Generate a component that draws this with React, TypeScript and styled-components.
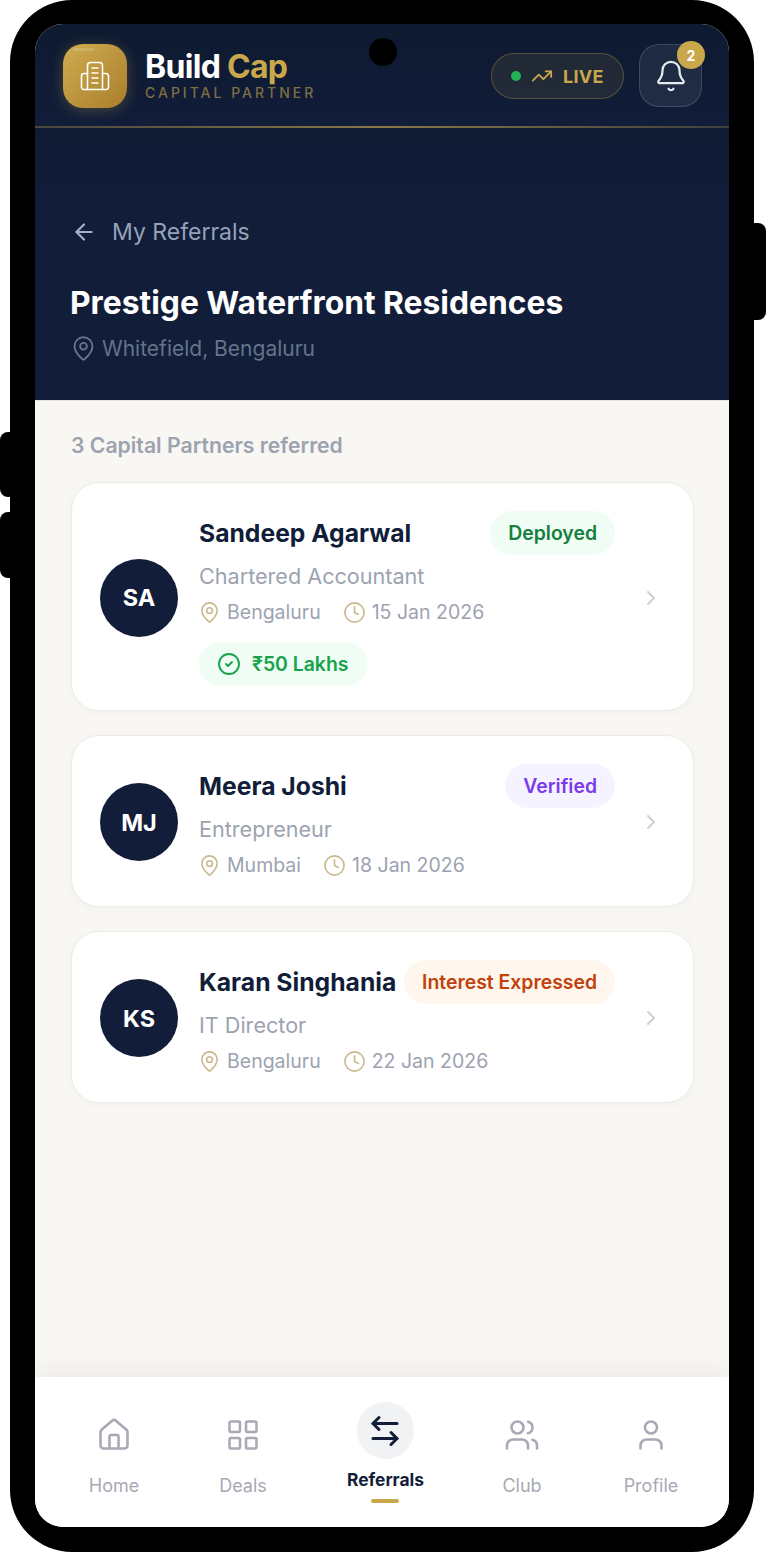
import React from "react";
import styled, { createGlobalStyle } from "styled-components";
import {
  ArrowLeft,
  ArrowLeftRight,
  Bell,
  ChevronRight,
  CircleCheck,
  Clock,
  House,
  LayoutGrid,
  MapPin,
  TrendingUp,
  User,
  Users,
} from "lucide-react";

type Referral = {
  initials: string;
  name: string;
  role: string;
  city: string;
  date: string;
  status: "deployed" | "verified" | "interest";
  statusLabel: string;
  amount?: string;
};

const referrals: Referral[] = [
  {
    initials: "SA",
    name: "Sandeep Agarwal",
    role: "Chartered Accountant",
    city: "Bengaluru",
    date: "15 Jan 2026",
    status: "deployed",
    statusLabel: "Deployed",
    amount: "₹50 Lakhs",
  },
  {
    initials: "MJ",
    name: "Meera Joshi",
    role: "Entrepreneur",
    city: "Mumbai",
    date: "18 Jan 2026",
    status: "verified",
    statusLabel: "Verified",
  },
  {
    initials: "KS",
    name: "Karan Singhania",
    role: "IT Director",
    city: "Bengaluru",
    date: "22 Jan 2026",
    status: "interest",
    statusLabel: "Interest Expressed",
  },
];

const statusColors = {
  deployed: { bg: "#f0fdf4", fg: "#15803d" },
  verified: { bg: "#f5f3ff", fg: "#7c3aed" },
  interest: { bg: "#fff7ed", fg: "#c2410c" },
};

const navItems = [
  { label: "Home", Icon: House },
  { label: "Deals", Icon: LayoutGrid },
  { label: "Referrals", Icon: ArrowLeftRight, active: true },
  { label: "Club", Icon: Users },
  { label: "Profile", Icon: User },
];

function App() {
  return (
    <>
      <GlobalStyle />
      <Phone>
        <SideKey $side="right" $top={223} $height={97} />
        <SideKey $side="left" $top={432} $height={65} />
        <SideKey $side="left" $top={512} $height={66} />
        <Screen>
          <Camera />
          <Header>
            <LogoBox>
              <svg width="30" height="30" viewBox="0 0 30 30" fill="none" stroke="#fff" strokeWidth="1.6" strokeLinecap="round" strokeLinejoin="round">
                <path d="M7.5 28.5V4.5a3 3 0 0 1 3-3h9a3 3 0 0 1 3 3v24" />
                <path d="M7.5 12.5H4a2.500 2.500 0 0 0-2.500 2.500v11a2.500 2.500 0 0 0 2.500 2.500h22a2.500 2.500 0 0 0 2.500-2.500V15a2.500 2.500 0 0 0-2.500-2.500h-3.500" />
                <path d="M12 7h6M12 12h6M12 17h6M12 22h6" />
              </svg>
            </LogoBox>
            <Brand>
              <BrandName>
                Build <Gold>Cap</Gold>
              </BrandName>
              <BrandSub>CAPITAL PARTNER</BrandSub>
            </Brand>
            <LivePill>
              <LiveDot />
              <TrendingUp size={22} color="#c9a84c" strokeWidth={2} />
              <LiveText>LIVE</LiveText>
            </LivePill>
            <BellButton>
              <Bell size={34} color="#e6e9ef" strokeWidth={1.6} />
              <BellBadge>2</BellBadge>
            </BellButton>
          </Header>
          <GoldLine />
          <Hero>
            <BackRow>
              <ArrowLeft size={26} color="#a3b1c6" strokeWidth={2} />
              <BackText>My Referrals</BackText>
            </BackRow>
            <Title>Prestige Waterfront Residences</Title>
            <LocationRow>
              <MapPin size={27} color="#64748b" strokeWidth={1.7} />
              <LocationText>Whitefield, Bengaluru</LocationText>
            </LocationRow>
          </Hero>
          <Content>
            <CountText>3 Capital Partners referred</CountText>
            <CardList>
              {referrals.map((r) => (
                <Card key={r.initials}>
                  <Avatar>{r.initials}</Avatar>
                  <Details>
                    <NameRow>
                      <Name>{r.name}</Name>
                      <StatusBadge $status={r.status}>{r.statusLabel}</StatusBadge>
                    </NameRow>
                    <Role>{r.role}</Role>
                    <MetaRow>
                      <MetaItem>
                        <MapPin size={23} color="#c9b98a" strokeWidth={1.7} />
                        {r.city}
                      </MetaItem>
                      <MetaItem>
                        <Clock size={23} color="#c9b98a" strokeWidth={1.7} />
                        {r.date}
                      </MetaItem>
                    </MetaRow>
                    {r.amount && (
                      <AmountPill>
                        <CircleCheck size={24} color="#16a34a" strokeWidth={1.9} />
                        {r.amount}
                      </AmountPill>
                    )}
                  </Details>
                  <Chevron>
                    <ChevronRight size={24} color="#d1d0c9" strokeWidth={2} />
                  </Chevron>
                </Card>
              ))}
            </CardList>
          </Content>
          <Nav>
            {navItems.map(({ label, Icon, active }) => (
              <NavItem key={label} $active={active}>
                <NavIcon $active={active}>
                  <Icon size={36} color={active ? "#111d3a" : "#a8a9b4"} strokeWidth={active ? 2 : 1.7} />
                </NavIcon>
                <NavLabel $active={active}>{label}</NavLabel>
                {active && <NavMark />}
              </NavItem>
            ))}
          </Nav>
        </Screen>
      </Phone>
    </>
  );
}

const GlobalStyle = createGlobalStyle`
  html, body {
    margin: 0;
    padding: 0;
    background: #ffffff;
  }
  body {
    font-family: "Inter", "Liberation Sans", sans-serif;
  }
`;

const Phone = styled.div`
  position: relative;
  box-sizing: border-box;
  width: 744px;
  height: 1552px;
  margin-left: 10px;
  padding: 24px 25px 25px;
  background: #000000;
  border-radius: 62px;
`;

const SideKey = styled.div<{ $side: "left" | "right"; $top: number; $height: number }>`
  position: absolute;
  top: ${(p) => p.$top}px;
  ${(p) => (p.$side === "left" ? "left: -10px;" : "right: -12px;")}
  width: 24px;
  height: ${(p) => p.$height}px;
  background: #000000;
  border-radius: 8px;
`;

const Screen = styled.div`
  position: relative;
  height: 100%;
  display: flex;
  flex-direction: column;
  overflow: hidden;
  border-radius: 28px;
  background: #f8f7f3;
`;

const Camera = styled.div`
  position: absolute;
  top: 14px;
  left: 334px;
  width: 28px;
  height: 28px;
  border-radius: 50%;
  background: #000000;
`;

const Header = styled.header`
  box-sizing: border-box;
  height: 102px;
  flex-shrink: 0;
  display: flex;
  align-items: flex-start;
  padding: 20px 27px 0 28px;
  background: linear-gradient(180deg, #0e1a30 0%, #111d39 100%);
`;

const LogoBox = styled.div`
  position: relative;
  width: 64px;
  height: 64px;
  display: flex;
  align-items: center;
  justify-content: center;
  border-radius: 20px;
  background: linear-gradient(135deg, #d0ac50 0%, #a97e2c 100%);
  box-shadow: 0 2px 14px rgba(201, 168, 76, 0.3);

  &::before {
    content: "";
    position: absolute;
    top: 4px;
    left: 10px;
    width: 22px;
    height: 3px;
    border-radius: 2px;
    background: rgba(255, 255, 255, 0.15);
  }
`;

const Brand = styled.div`
  margin-left: 18px;
  margin-top: 5px;
  display: flex;
  flex-direction: column;
`;

const BrandName = styled.div`
  font-size: 32px;
  line-height: 36px;
  font-weight: 700;
  letter-spacing: -0.7px;
  color: #ffffff;
`;

const Gold = styled.span`
  color: #c9a84c;
`;

const BrandSub = styled.div`
  font-size: 14px;
  line-height: 16px;
  font-weight: 500;
  letter-spacing: 3px;
  color: rgba(201, 168, 76, 0.6);
`;

const LivePill = styled.div`
  box-sizing: border-box;
  width: 133px;
  height: 46px;
  margin-left: auto;
  margin-top: 9px;
  display: flex;
  align-items: center;
  padding-left: 19px;
  gap: 10px;
  border-radius: 23px;
  border: 1.5px solid rgba(201, 168, 76, 0.32);
  background: rgba(201, 168, 76, 0.1);
`;

const LiveDot = styled.span`
  width: 10px;
  height: 10px;
  border-radius: 50%;
  background: #22b455;
`;

const LiveText = styled.span`
  font-size: 18px;
  font-weight: 700;
  letter-spacing: 0.3px;
  color: #c9a84c;
`;

const BellButton = styled.div`
  position: relative;
  box-sizing: border-box;
  width: 63px;
  height: 63px;
  margin-left: 15px;
  display: flex;
  align-items: center;
  justify-content: center;
  border-radius: 20px;
  border: 1.5px solid rgba(255, 255, 255, 0.14);
  background: rgba(255, 255, 255, 0.07);
`;

const BellBadge = styled.span`
  position: absolute;
  top: -4px;
  right: -4px;
  width: 28px;
  height: 28px;
  display: flex;
  align-items: center;
  justify-content: center;
  border-radius: 50%;
  background: #c9a84c;
  font-size: 14px;
  font-weight: 700;
  color: #ffffff;
`;

const GoldLine = styled.div`
  height: 2px;
  flex-shrink: 0;
  background-color: #111d39;
  background-image: linear-gradient(90deg, rgba(201, 168, 76, 0.3) 0%, rgba(201, 168, 76, 0.65) 50%, rgba(201, 168, 76, 0.25) 100%);
`;

const Hero = styled.section`
  box-sizing: border-box;
  height: 273px;
  flex-shrink: 0;
  padding: 88px 35px 0;
  background: linear-gradient(180deg, #0f1b33 0, #111d39 70px);
  border-bottom: 1px solid #e5e4df;
`;

const BackRow = styled.div`
  height: 32px;
  display: flex;
  align-items: center;
  gap: 15px;
  padding-left: 1px;
`;

const BackText = styled.span`
  font-size: 23px;
  color: #94a3b8;
`;

const Title = styled.h1`
  margin: 35px 0 0;
  font-size: 31.8px;
  line-height: 40px;
  font-weight: 700;
  color: #ffffff;
`;

const LocationRow = styled.div`
  margin-top: 10px;
  height: 30px;
  display: flex;
  align-items: center;
  gap: 5px;
`;

const LocationText = styled.span`
  font-size: 21px;
  color: #64748b;
`;

const Content = styled.main`
  flex: 1;
  padding: 29px 35px 0 36px;
`;

const CountText = styled.div`
  font-size: 21.2px;
  line-height: 30px;
  font-weight: 600;
  color: #9ca3af;
`;

const CardList = styled.div`
  margin-top: 22px;
  display: flex;
  flex-direction: column;
  gap: 24px;
`;

const Card = styled.article`
  box-sizing: border-box;
  display: flex;
  align-items: center;
  padding: 28px 30px 26px 28px;
  background: #ffffff;
  border: 1.5px solid #ecebe4;
  border-radius: 28px;
  box-shadow: 0 2px 8px rgba(0, 0, 0, 0.03);
`;

const Avatar = styled.div`
  width: 78px;
  height: 78px;
  flex-shrink: 0;
  display: flex;
  align-items: center;
  justify-content: center;
  border-radius: 50%;
  background: #111d39;
  font-size: 23.5px;
  font-weight: 700;
  color: #ffffff;
`;

const Details = styled.div`
  flex: 1;
  margin-left: 21px;
  display: flex;
  flex-direction: column;
  align-items: flex-start;
`;

const NameRow = styled.div`
  width: 100%;
  height: 44px;
  display: flex;
  align-items: center;
  justify-content: space-between;
`;

const Name = styled.div`
  font-size: 24.7px;
  font-weight: 700;
  color: #111d39;
  white-space: nowrap;
`;

const StatusBadge = styled.span<{ $status: Referral["status"] }>`
  height: 44px;
  display: flex;
  align-items: center;
  padding: 0 18px;
  border-radius: 22px;
  font-size: 19.4px;
  font-weight: 600;
  white-space: nowrap;
  background: ${(p) => statusColors[p.$status].bg};
  color: ${(p) => statusColors[p.$status].fg};
`;

const Role = styled.div`
  margin-top: 6px;
  font-size: 21.6px;
  line-height: 30px;
  color: #9ca3af;
`;

const MetaRow = styled.div`
  margin: 6px 0 0 -1px;
  height: 30px;
  display: flex;
  align-items: center;
  gap: 22px;
`;

const MetaItem = styled.span`
  display: flex;
  align-items: center;
  gap: 6px;
  font-size: 19.5px;
  color: #9ca3af;
`;

const AmountPill = styled.div`
  margin: 15px 0 -2px;
  height: 44px;
  display: flex;
  align-items: center;
  gap: 11px;
  padding: 0 19px 0 18px;
  border-radius: 22px;
  background: #f0fdf4;
  font-size: 19.4px;
  font-weight: 600;
  color: #16a34a;
`;

const Chevron = styled.div`
  width: 24px;
  margin-left: 24px;
  flex-shrink: 0;
  display: flex;
`;

const Nav = styled.nav`
  position: relative;
  box-sizing: border-box;
  height: 150px;
  flex-shrink: 0;
  display: flex;
  justify-content: space-between;
  align-items: flex-start;
  padding: 25px 50px 0 51px;
  background: #ffffff;
  box-shadow: 0 -8px 24px rgba(0, 0, 0, 0.05);
`;

const NavItem = styled.div<{ $active?: boolean }>`
  display: flex;
  flex-direction: column;
  align-items: center;
  ${(p) => p.$active && "margin: 0 -3px 0 3px;"}
`;

const NavIcon = styled.div<{ $active?: boolean }>`
  width: ${(p) => (p.$active ? "57px" : "56px")};
  height: ${(p) => (p.$active ? "57px" : "56px")};
  margin-top: ${(p) => (p.$active ? "0" : "5px")};
  display: flex;
  align-items: center;
  justify-content: center;
  border-radius: 50%;
  background: ${(p) => (p.$active ? "#f1f2f4" : "transparent")};
`;

const NavLabel = styled.span<{ $active?: boolean }>`
  margin-top: ${(p) => (p.$active ? "8px" : "10px")};
  font-size: ${(p) => (p.$active ? "17.4px" : "18px")};
  line-height: 26px;
  font-weight: ${(p) => (p.$active ? 700 : 400)};
  color: ${(p) => (p.$active ? "#111d39" : "#a8a9b4")};
`;

const NavMark = styled.span`
  width: 28px;
  height: 4px;
  margin-top: 6px;
  border-radius: 2px;
  background: #c9a84c;
`;

export default App;
